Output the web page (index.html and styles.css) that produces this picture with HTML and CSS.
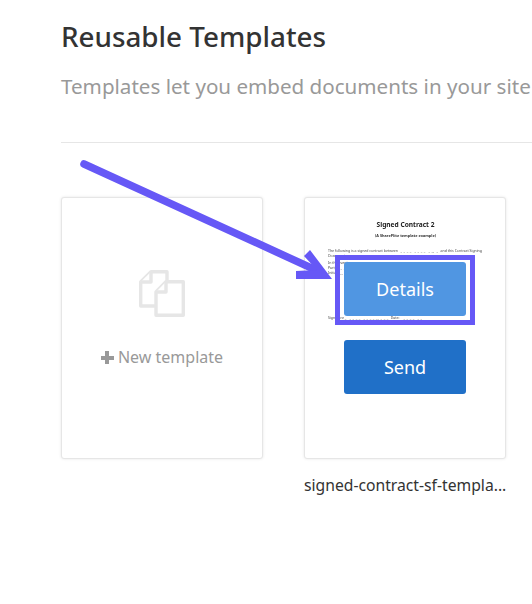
FILE: index.html
```html
<!DOCTYPE html>
<html lang="en">
<head>
    <meta charset="UTF-8">
    <title>Reusable Templates</title>
    <link rel="stylesheet" href="styles.css">
</head>
<body>
<div id="page">
    <h1 class="title">Reusable Templates</h1>
    <p class="intro">Templates let you embed documents in your site</p>
    <hr class="rule">
    <div class="cards">
        <div class="item">
            <div class="card new">
                <svg class="docs" width="46" height="47" viewBox="0 0 46 47" fill="#fff" stroke="#e6e6e6" stroke-width="3.4" stroke-linejoin="round">
                    <path d="M12 1.7H28V36H1.7V12z"/>
                    <path d="M12 1.7V12H1.7"/>
                    <path d="M27 11.7H44.3V45.3H17V22z"/>
                    <path d="M27 11.7V22H17"/>
                </svg>
                <div class="new-label"><span class="plus"></span>New template</div>
            </div>
        </div>
        <div class="item">
            <div class="card doc">
                <div class="sheet">
                    <div class="sheet-title">Signed Contract 2</div>
                    <div class="sheet-sub">(A SharePlite template example)</div>
                    <div class="sheet-line">The following is a signed contract between ______________________, ___ and this Contract Signing</div>
                    <div class="sheet-line">Document</div>
                    <div class="sheet-line gap">In the event</div>
                    <div class="sheet-line">Party ______</div>
                    <div class="sheet-line">Initials ____</div>
                    <div class="sheet-line sign">Signature _____________________________ Date: ______________</div>
                </div>
                <div class="buttons">
                    <div class="btn-frame"><a href="#" class="btn details">Details</a></div>
                    <a href="#" class="btn send">Send</a>
                </div>
            </div>
            <div class="name">signed-contract-sf-templa...</div>
        </div>
    </div>
</div>
<svg class="arrow" width="532" height="604" viewBox="0 0 532 604">
    <path d="M84 164L318 271" fill="none" stroke="#6658f6" stroke-width="7.5" stroke-linecap="round"/>
    <path d="M332 279L296 279L296 271L317 270L304 256L310 250z" fill="#6658f6"/>
</svg>
</body>
</html>
```

FILE: styles.css
```css
html, body {
    margin: 0;
    padding: 0;
    height: 100%;
    background-color: #fff;
    overflow: hidden;
}

body {
    position: relative;
    font-family: "Noto Sans", sans-serif;
}

#page {
    padding: 16px 0 0 61px;
}

.title {
    margin: 0;
    font-size: 27.8px;
    line-height: 40px;
    font-weight: 500;
    color: #333;
    white-space: nowrap;
}

.intro {
    margin: 14px 0 0;
    font-size: 20.6px;
    line-height: 32px;
    color: #999;
    white-space: nowrap;
}

.rule {
    margin: 40px 0 54px;
    border: 0;
    border-top: 1px solid #e6e6e6;
}

.cards {
    display: flex;
    gap: 41px;
}

.item {
    width: 202px;
}

.card {
    height: 260px;
    border: 1px solid #e6e6e6;
    border-radius: 3px;
    background-color: #fff;
    box-shadow: 0 0 3px rgba(0, 0, 0, 0.1);
}

.new {
    display: flex;
    flex-direction: column;
    align-items: center;
}

.docs {
    margin-top: 72px;
}

.new-label {
    margin-top: 29px;
    font-size: 16px;
    line-height: 22px;
    color: #999;
}

.plus {
    display: inline-block;
    width: 13px;
    height: 13px;
    margin-right: 4px;
    vertical-align: -1px;
    background:
        linear-gradient(#999, #999) center / 13px 4px no-repeat,
        linear-gradient(#999, #999) center / 4px 13px no-repeat;
}

.doc {
    position: relative;
}

.sheet {
    padding: 22px 22px 0 23px;
    filter: blur(0.35px);
}

.sheet-title {
    font-size: 6.6px;
    line-height: 10px;
    font-weight: 700;
    color: #222;
    text-align: center;
}

.sheet-sub {
    margin-top: 3px;
    font-size: 3.8px;
    line-height: 6px;
    font-weight: 700;
    color: #333;
    text-align: center;
}

.sheet-line {
    font-size: 3.5px;
    line-height: 5px;
    color: #444;
    white-space: nowrap;
}

.sheet-sub + .sheet-line {
    margin-top: 9px;
}

.gap {
    margin-top: 2px;
}

.sign {
    margin-top: 40px;
}

.buttons {
    position: absolute;
    top: 57px;
    left: 0;
    right: 0;
    display: flex;
    flex-direction: column;
    align-items: center;
    gap: 15px;
}

.btn-frame {
    padding: 2px 4px 4px;
    border: 5px solid #6658f6;
}

.btn {
    display: block;
    width: 122px;
    height: 54px;
    border-radius: 3px;
    font-size: 18px;
    line-height: 54px;
    text-align: center;
    text-decoration: none;
    color: #fff;
}

.details {
    background-color: #5096e2;
}

.send {
    background-color: #2070c8;
}

.name {
    margin-top: 14px;
    font-size: 15.7px;
    line-height: 24px;
    color: #333;
    white-space: nowrap;
}

.arrow {
    position: absolute;
    top: 0;
    left: 0;
    pointer-events: none;
}
```
